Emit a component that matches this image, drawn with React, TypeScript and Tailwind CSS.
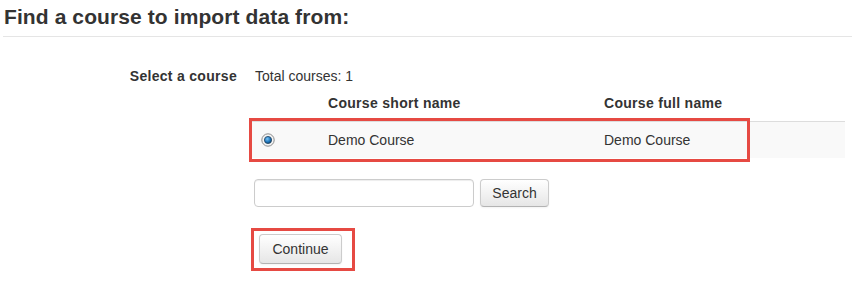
import React from 'react';

const RadioChecked: React.FC = () => (
  <svg width="14" height="14" viewBox="0 0 14 14" className="block">
    <defs>
      <radialGradient id="dot" cx="40%" cy="35%" r="70%">
        <stop offset="0%" stopColor="#7cc4f5" />
        <stop offset="60%" stopColor="#1c75bc" />
        <stop offset="100%" stopColor="#0d3f66" />
      </radialGradient>
    </defs>
    <circle cx="7" cy="7" r="6.2" fill="#f4f4f4" stroke="#8c8c8c" strokeWidth="1" />
    <circle cx="7" cy="7" r="3.6" fill="url(#dot)" stroke="#23435e" strokeWidth="0.8" />
  </svg>
);

const App: React.FC = () => {
  return (
    <div className="w-[852px] h-[281px] overflow-hidden bg-white text-[#333] font-['Liberation_Sans',Arial,sans-serif]">
      <div className="ml-[3px] pt-[5px] pb-[7px] border-b border-[#e5e5e5]">
        <h2 className="pl-[1px] text-[21px] leading-[24px] font-bold tracking-[0.1px]">Find a course to import data from:</h2>
      </div>

      <div className="mt-[29px] flex gap-[13px]">
        <div className="w-[237px] text-right text-[14px] leading-[20px] font-bold tracking-[0.3px]">Select a course</div>

        <div className="flex flex-col">
          <div className="pl-[5px] text-[14px] leading-[20px]">Total courses: 1</div>

          <div className="relative w-[595px]">
            <table className="w-full border-collapse text-[14px] leading-[20px]">
              <thead>
                <tr>
                  <th className="w-[70px] pt-[7px] pb-[8px] px-[8px]"></th>
                  <th className="w-[276px] pt-[7px] pb-[8px] px-[8px] text-left font-bold tracking-[0.3px]">Course short name</th>
                  <th className="pt-[7px] pb-[8px] px-[8px] text-left font-bold tracking-[0.3px]">Course full name</th>
                </tr>
              </thead>
              <tbody>
                <tr className="bg-[#f9f9f9]">
                  <td className="border-t border-[#ddd] py-[8px] pl-[11px] align-middle">
                    <RadioChecked />
                  </td>
                  <td className="border-t border-[#ddd] p-[8px]">Demo Course</td>
                  <td className="border-t border-[#ddd] p-[8px]">Demo Course</td>
                </tr>
              </tbody>
            </table>
            <div className="absolute left-[-1px] top-[32px] w-[501px] h-[44px] border-[3px] border-[#e64a43]"></div>
          </div>

          <div className="mt-[21px] flex gap-[6px]">
            <input
              type="text"
              className="ml-[4px] w-[220px] h-[28px] border border-[#ccc] rounded-[4px] bg-white shadow-[inset_0_1px_1px_rgba(0,0,0,0.075)] outline-none"
            />
            <button className="w-[69px] h-[28px] rounded-[4px] border border-[#ccc] border-b-[#b3b3b3] bg-linear-to-b from-white to-[#e6e6e6] text-[14px] text-[#333] shadow-[0_1px_2px_rgba(0,0,0,0.05)]">
              Search
            </button>
          </div>

          <div className="mt-[27px] ml-[9px] relative w-[83px]">
            <button className="w-[83px] h-[30px] rounded-[4px] border border-[#ccc] border-b-[#b3b3b3] bg-linear-to-b from-white to-[#e6e6e6] text-[14px] text-[#333] shadow-[0_1px_2px_rgba(0,0,0,0.05)]">
              Continue
            </button>
            <div className="absolute left-[-8px] top-[-6px] w-[104px] h-[43px] border-[3px] border-[#e64a43]"></div>
          </div>
        </div>
      </div>
    </div>
  );
};

export default App;
